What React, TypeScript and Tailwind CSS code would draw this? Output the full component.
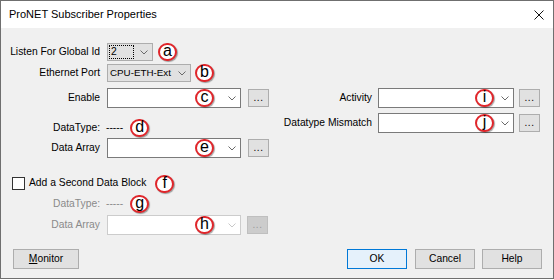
import React from 'react';

// ProNET Subscriber Properties — Win10-style dialog with red annotation badges

const FONT = "font-[family-name:Liberation_Sans,Arial,sans-serif]";

function Chevron({ disabled = false }: { disabled?: boolean }) {
  return (
    <svg width="8" height="5" viewBox="0 0 8 5" className="shrink-0">
      <polyline points="0.5,0.5 4,4 7.5,0.5" fill="none"
        stroke={disabled ? '#c8c8c8' : '#6a6a6a'} strokeWidth="1" />
    </svg>
  );
}

function Badge({ ch }: { ch: string }) {
  return (
    <span className="w-[19px] h-[18px] shrink-0 rounded-full border-2 border-[#e0262b] bg-white flex items-center justify-center text-[16px] leading-none text-black shadow-[1px_1px_1px_rgba(0,0,0,0.35)]">
      <span className="-mt-[2px]">{ch}</span>
    </span>
  );
}

function Dots({ disabled = false }: { disabled?: boolean }) {
  return (
    <div className={`w-[21px] h-[18px] shrink-0 border flex items-center justify-center text-[10px] leading-none pb-[1px] tracking-[0.5px] ${
      disabled ? 'bg-[#cccccc] border-[#bfbfbf] text-[#9a9a9a]' : 'bg-[#e1e1e1] border-[#adadad] text-black'}`}>
      ...
    </div>
  );
}

function Field({ ch, width, badgeAt, disabled = false }: { ch: string; width: string; badgeAt: string; disabled?: boolean }) {
  return (
    <div className={`${width} h-[20px] shrink-0 bg-white border flex items-center ${disabled ? 'border-[#cccccc]' : 'border-[#7a7a7a]'}`}>
      <span className={`${badgeAt} shrink-0`} />
      <Badge ch={ch} />
      <span className="ml-auto mr-[4px]"><Chevron disabled={disabled} /></span>
    </div>
  );
}

function Label({ children, grey = false, w = 'w-[99px]' }: { children: React.ReactNode; grey?: boolean; w?: string }) {
  return <span className={`${w} shrink-0 text-right whitespace-nowrap ${grey ? 'text-[#8a8a8a]' : 'text-black'}`}>{children}</span>;
}

function Button({ children, w, primary = false }: { children: React.ReactNode; w: string; primary?: boolean }) {
  return (
    <div className={`${w} h-[20px] border flex items-center justify-center ${
      primary ? 'bg-[#e5f1fb] border-[#0078d7]' : 'bg-[#e1e1e1] border-[#adadad]'}`}>
      {children}
    </div>
  );
}

export default function App() {
  return (
    <div className={`w-[554px] h-[280px] bg-white ${FONT}`}>
      <div className="w-[554px] h-[279px] border border-[#6f6f6f] flex flex-col bg-[#f0f0f0]">

        {/* Title bar */}
        <div className="h-[27px] bg-white flex items-center pl-[8px] pr-[9px] shrink-0">
          <span className="text-[11px] text-black">ProNET Subscriber Properties</span>
          <svg width="10" height="10" viewBox="0 0 10 10" className="ml-auto">
            <path d="M0.5 0.5 L9.5 9.5 M9.5 0.5 L0.5 9.5" stroke="#111" strokeWidth="1" />
          </svg>
        </div>

        {/* Body */}
        <div className="flex flex-col pt-[15px] text-[10.3px] leading-none">

          {/* a */}
          <div className="flex items-center h-[18px]">
            <Label>Listen For Global Id</Label>
            <div className="ml-[7px] w-[46px] h-[18px] bg-[#e1e1e1] border border-[#adadad] flex items-center">
              <span className="ml-[1px] w-[25px] h-[14px] border border-dotted border-black flex items-center pl-[1px]">2</span>
              <span className="ml-auto mr-[4px]"><Chevron /></span>
            </div>
            <span className="ml-[5px]"><Badge ch="a" /></span>
          </div>

          {/* b */}
          <div className="flex items-center h-[18px] mt-[3px]">
            <Label>Ethernet Port</Label>
            <div className="ml-[7px] w-[84px] h-[18px] bg-[#e1e1e1] border border-[#adadad] flex items-center">
              <span className="ml-[2px] text-[9.8px]">CPU-ETH-Ext</span>
              <span className="ml-auto mr-[4px]"><Chevron /></span>
            </div>
            <span className="ml-[4px]"><Badge ch="b" /></span>
          </div>

          {/* c / i */}
          <div className="flex items-center h-[20px] mt-[6px]">
            <div className="w-[269px] flex items-center shrink-0">
              <Label>Enable</Label>
              <span className="ml-[7px]"><Field ch="c" width="w-[134px]" badgeAt="w-[87px]" /></span>
              <span className="ml-[7px]"><Dots /></span>
            </div>
            <Label w="w-[102px]">Activity</Label>
            <span className="ml-[6px]"><Field ch="i" width="w-[136px]" badgeAt="w-[96px]" /></span>
            <span className="ml-[5px]"><Dots /></span>
          </div>

          {/* d / j */}
          <div className="flex items-start h-[20px] mt-[5px]">
            <div className="w-[269px] h-[18px] mt-[6px] flex items-center shrink-0">
              <Label>DataType:</Label>
              <span className="ml-[6px]">-----</span>
              <span className="ml-[7px]"><Badge ch="d" /></span>
            </div>
            <div className="flex items-center h-[20px]">
              <Label w="w-[102px]">Datatype Mismatch</Label>
              <span className="ml-[6px]"><Field ch="j" width="w-[136px]" badgeAt="w-[96px]" /></span>
              <span className="ml-[5px]"><Dots /></span>
            </div>
          </div>

          {/* e */}
          <div className="flex items-center h-[20px] mt-[5px]">
            <Label>Data Array</Label>
            <span className="ml-[7px]"><Field ch="e" width="w-[134px]" badgeAt="w-[87px]" /></span>
            <span className="ml-[7px]"><Dots /></span>
          </div>

          {/* f */}
          <div className="flex items-center h-[17px] mt-[17px]">
            <span className="ml-[11px] w-[13px] h-[13px] bg-white border border-[#333333] shrink-0" />
            <span className="ml-[4px] text-black">Add a Second Data Block</span>
            <span className="ml-[9px]"><Badge ch="f" /></span>
          </div>

          {/* g */}
          <div className="flex items-center h-[18px] mt-[3px]">
            <Label grey>DataType:</Label>
            <span className="ml-[6px] text-[#8a8a8a]">-----</span>
            <span className="ml-[7px]"><Badge ch="g" /></span>
          </div>

          {/* h */}
          <div className="flex items-center h-[20px] mt-[2px]">
            <Label grey>Data Array</Label>
            <span className="ml-[7px]"><Field ch="h" width="w-[134px]" badgeAt="w-[87px]" disabled /></span>
            <span className="ml-[6px]"><Dots disabled /></span>
          </div>

          {/* Buttons */}
          <div className="flex items-center h-[20px] mt-[14px] pl-[12px] pr-[11px]">
            <Button w="w-[66px]"><span><span className="underline">M</span>onitor</span></Button>
            <span className="ml-auto" />
            <Button w="w-[60px]" primary>OK</Button>
            <span className="ml-[8px]"><Button w="w-[60px]">Cancel</Button></span>
            <span className="ml-[7px]"><Button w="w-[60px]">Help</Button></span>
          </div>
        </div>
      </div>
    </div>
  );
}
